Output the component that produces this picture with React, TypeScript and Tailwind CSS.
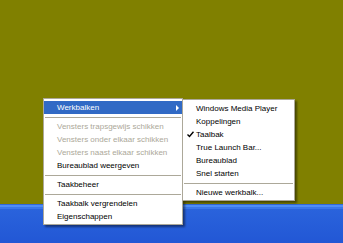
import React from "react";

type Item = { label: string; disabled?: boolean; active?: boolean; sub?: boolean; checked?: boolean } | "sep";

const mainItems: Item[] = [
  { label: "Werkbalken", active: true, sub: true },
  "sep",
  { label: "Vensters trapsgewijs schikken", disabled: true },
  { label: "Vensters onder elkaar schikken", disabled: true },
  { label: "Vensters naast elkaar schikken", disabled: true },
  { label: "Bureaublad weergeven" },
  "sep",
  { label: "Taakbeheer" },
  "sep",
  { label: "Taakbalk vergrendelen" },
  { label: "Eigenschappen" },
];

const subItems: Item[] = [
  { label: "Windows Media Player" },
  { label: "Koppelingen" },
  { label: "Taalbak", checked: true },
  { label: "True Launch Bar..." },
  { label: "Bureaublad" },
  { label: "Snel starten" },
  "sep",
  { label: "Nieuwe werkbalk..." },
];

function Check() {
  return (
    <svg width="7" height="7" viewBox="0 0 7 7" className="absolute left-[4px] top-[3px]">
      <path d="M0.5 3.5 L2.5 5.5 L6.5 0.8" stroke="#000" strokeWidth="1.4" fill="none" />
    </svg>
  );
}

function Menu({ items, className }: { items: Item[]; className: string }) {
  return (
    <div
      className={`absolute bg-white border border-[#aca899] pt-[2px] pb-[1px] shadow-[2px_2px_2px_rgba(0,0,0,0.45)] ${className}`}
    >
      {items.map((it, i) =>
        it === "sep" ? (
          <div key={i} className="h-[6px] flex items-center px-[1px]">
            <div className="h-px w-full bg-[#aca899]" />
          </div>
        ) : (
          <div
            key={i}
            className={`relative h-[13px] flex items-center pl-[13px] pr-2 whitespace-nowrap ${
              it.active ? "bg-[#316ac5] text-white" : it.disabled ? "text-[#aca899]" : "text-black"
            }`}
          >
            {it.checked && <Check />}
            <span>{it.label}</span>
            {it.sub && (
              <span className="absolute right-[3px] top-[4px] w-0 h-0 border-y-[3px] border-y-transparent border-l-[3px] border-l-white" />
            )}
          </div>
        )
      )}
    </div>
  );
}

export default function App() {
  return (
    <div
      className="relative w-[343px] h-[243px] overflow-hidden flex flex-col text-[8px] leading-[13px]"
      style={{ fontFamily: '"Liberation Sans", Arial, sans-serif' }}
    >
      <div className="h-[204px] bg-[#808000]" />
      <div className="flex-1 flex flex-col bg-[#245edb]">
        <div className="h-px bg-[#3168d5]" />
        <div className="h-[2px] bg-[#4f8df5]" />
        <div className="h-[2px] bg-[#3b77e8]" />
        <div className="flex-1 bg-gradient-to-b from-[#2a63dc] to-[#2257d5]" />
      </div>
      <Menu items={mainItems} className="left-[43px] top-[98px] w-[140px]" />
      <Menu items={subItems} className="left-[182px] top-[99px] w-[113px]" />
    </div>
  );
}
